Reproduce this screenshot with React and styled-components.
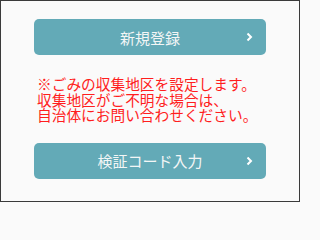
import React from "react";
import styled, { createGlobalStyle } from "styled-components";

// page reset
const GlobalStyle = createGlobalStyle`
  html, body {
    margin: 0;
    padding: 0;
    background: #fafafa;
  }
`;

// outer frame with the thin dark border
const Frame = styled.div`
  width: 300px;
  height: 202px;
  box-sizing: border-box;
  border: 1px solid #3a3a3a;
  background: #fafafa;
  display: flex;
  flex-direction: column;
  align-items: center;
  padding-top: 18px;
  font-family: "Noto Sans CJK JP", "Noto Sans", sans-serif;
`;

// teal action button
const ActionButton = styled.button`
  width: 232px;
  height: 36px;
  flex: none;
  box-sizing: border-box;
  border: none;
  border-radius: 5px;
  background: #63aab7;
  color: #f3f6f6;
  font-family: inherit;
  font-size: 15px;
  position: relative;
  display: flex;
  align-items: center;
  justify-content: center;
  padding: 0;
  cursor: pointer;
`;

// chevron on the right of the button
const Chevron = styled.svg`
  position: absolute;
  right: 13px;
  top: 50%;
  transform: translateY(-50%);
`;

// red notice text
const Notice = styled.p`
  width: 232px;
  box-sizing: border-box;
  margin: 21px 0 20px;
  padding-left: 3px;
  color: #ff1e1e;
  font-size: 14.7px;
  line-height: 15.6px;
`;

const Arrow = () => (
  <Chevron width="7" height="9" viewBox="0 0 7 9">
    <polyline
      points="1.5,1 5,4.5 1.5,8"
      fill="none"
      stroke="#ffffff"
      strokeWidth="2"
    />
  </Chevron>
);

const App = () => {
  return (
    <>
      <GlobalStyle />
      <Frame>
        <ActionButton>
          新規登録
          <Arrow />
        </ActionButton>
        <Notice>
          ※ごみの収集地区を設定します。
          <br />
          収集地区がご不明な場合は、
          <br />
          自治体にお問い合わせください。
        </Notice>
        <ActionButton>
          検証コード入力
          <Arrow />
        </ActionButton>
      </Frame>
    </>
  );
};

export default App;
